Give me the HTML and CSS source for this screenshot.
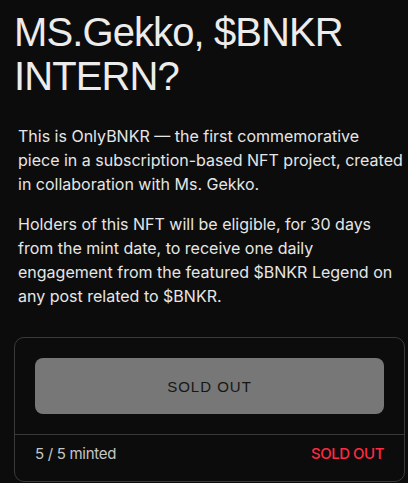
FILE: index.html
```html
<!DOCTYPE html>
<html lang="en">
<head>
<meta charset="utf-8">
<title>MS.Gekko, $BNKR INTERN?</title>
<link rel="stylesheet" href="styles.css">
</head>
<body>
<main class="page">
  <h1 class="title">MS.Gekko, $BNKR INTERN?</h1>
  <div class="desc">
    <p>This is OnlyBNKR — the first commemorative piece in a subscription-based NFT project, created in collaboration with Ms. Gekko.</p>
    <p>Holders of this NFT will be eligible, for 30 days from the mint date, to receive one daily engagement from the featured $BNKR Legend on any post related to $BNKR.</p>
  </div>
  <section class="card">
    <div class="card-body">
      <button class="mint-btn" disabled>SOLD OUT</button>
    </div>
    <div class="card-footer">
      <span class="minted">5 / 5 minted</span>
      <span class="status">SOLD OUT</span>
    </div>
  </section>
</main>
</body>
</html>
```
FILE: styles.css
```css
* { box-sizing: border-box; }
html, body {
  margin: 0;
  padding: 0;
  background: #0c0c0c;
}
body {
  color: #e8e8e8;
  font-family: Inter, "Liberation Sans", sans-serif;
  overflow: hidden;
}
.page {
  width: 391px;
  margin-left: 14px;
  padding-top: 10px;
}
.title {
  margin: 0 0 26px 0;
  font-family: "Liberation Sans", Arial, sans-serif;
  font-weight: 400;
  font-size: 40px;
  line-height: 44px;
  letter-spacing: -0.9px;
  color: #ececec;
}
.desc {
  padding-left: 4px;
}
.desc p {
  margin: 0 0 16px 0;
  font-size: 16px;
  line-height: 24px;
  color: #e6e6e6;
}
.desc p:last-child { margin-bottom: 0; }
.card {
  margin-top: 29px;
  border: 1px solid #3a3a3a;
  border-radius: 10px;
}
.card-body {
  padding: 20px;
}
.mint-btn {
  display: block;
  width: 100%;
  height: 56px;
  border: 0;
  border-radius: 8px;
  background: #777777;
  color: #161616;
  font-family: "Liberation Sans", Arial, sans-serif;
  font-size: 15px;
  letter-spacing: 1px;
}
.card-footer {
  display: flex;
  justify-content: space-between;
  align-items: center;
  border-top: 1px solid #3a3a3a;
  padding: 9px 20px 17px;
  font-size: 15px;
  line-height: 20px;
}
.minted { color: #c4c6c8; letter-spacing: -0.3px; }
.status { color: #ff2a42; font-weight: 500; letter-spacing: -0.5px; }
```
